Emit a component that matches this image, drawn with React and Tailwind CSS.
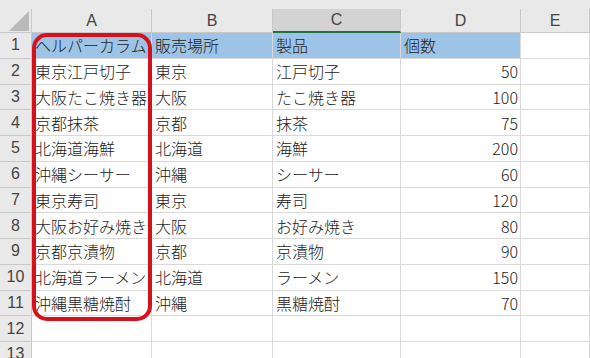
const cols = [
  { key: "A", w: "w-[120px]" },
  { key: "B", w: "w-[121px]" },
  { key: "C", w: "w-[128px]" },
  { key: "D", w: "w-[120px]" },
  { key: "E", w: "flex-1" },
];

const rows = [
  ["ヘルパーカラム", "販売場所", "製品", "個数"],
  ["東京江戸切子", "東京", "江戸切子", 50],
  ["大阪たこ焼き器", "大阪", "たこ焼き器", 100],
  ["京都抹茶", "京都", "抹茶", 75],
  ["北海道海鮮", "北海道", "海鮮", 200],
  ["沖縄シーサー", "沖縄", "シーサー", 60],
  ["東京寿司", "東京", "寿司", 120],
  ["大阪お好み焼き", "大阪", "お好み焼き", 80],
  ["京都京漬物", "京都", "京漬物", 90],
  ["北海道ラーメン", "北海道", "ラーメン", 150],
  ["沖縄黒糖焼酎", "沖縄", "黒糖焼酎", 70],
  [],
  [],
];

const App = () => {
  return (
    <div
      className="relative w-[590px] h-[358px] overflow-hidden bg-white text-[#222222] font-light"
      style={{ fontFamily: '"Noto Sans CJK JP", "Noto Sans", sans-serif' }}
    >
      {/* column header */}
      <div className="flex h-[33px] bg-[#e9e9e9] pt-[9px]">
        <div className="relative w-[32px] h-[24px] border-r border-b border-[#c8c8c8]">
          <svg className="absolute left-[9px] top-[2px]" width="20" height="20" viewBox="0 0 20 20">
            <polygon points="20,0 20,20 0,20" fill="#b9b9b9" />
          </svg>
        </div>
        {cols.map((c) => (
          <div
            key={c.key}
            className={
              c.key === "C"
                ? `${c.w} h-[24px] flex items-center justify-center bg-[#d3d3d3] border-r border-[#c8c8c8] border-b-2 border-b-[#217346] text-[16px] text-[#444444]`
                : `${c.w} h-[24px] flex items-center justify-center border-r border-b border-[#c8c8c8] text-[16px] text-[#444444]`
            }
            style={{ fontFamily: '"Liberation Sans", sans-serif' }}
          >
            {c.key}
          </div>
        ))}
      </div>

      {/* body rows */}
      {rows.map((r, i) => (
        <div key={i} className="flex h-[25.75px]">
          <div
            className="w-[32px] shrink-0 flex items-center justify-center bg-[#e9e9e9] border-r border-b border-[#c8c8c8] text-[16px] text-[#444444]"
            style={{ fontFamily: '"Liberation Sans", sans-serif' }}
          >
            {i + 1}
          </div>
          {cols.map((c, j) => {
            const v = r[j];
            const isNum = typeof v === "number";
            const head = i === 0 && j < 4;
            return (
              <div
                key={c.key}
                className={`${c.w} shrink-0 flex items-center overflow-hidden whitespace-nowrap border-r border-b border-[#d9d9d9] text-[16px] ${
                  isNum ? "justify-end pr-[2px]" : "pl-[3px]"
                } ${head ? "bg-[#9dc3e6]" : ""}`}
              >
                {v}
              </div>
            );
          })}
        </div>
      ))}

      {/* red highlight around column A */}
      <div className="absolute left-[32px] top-[33px] w-[120px] h-[288px] border-4 border-[#d7111b] rounded-[15px]" />
    </div>
  );
};

export default App;
